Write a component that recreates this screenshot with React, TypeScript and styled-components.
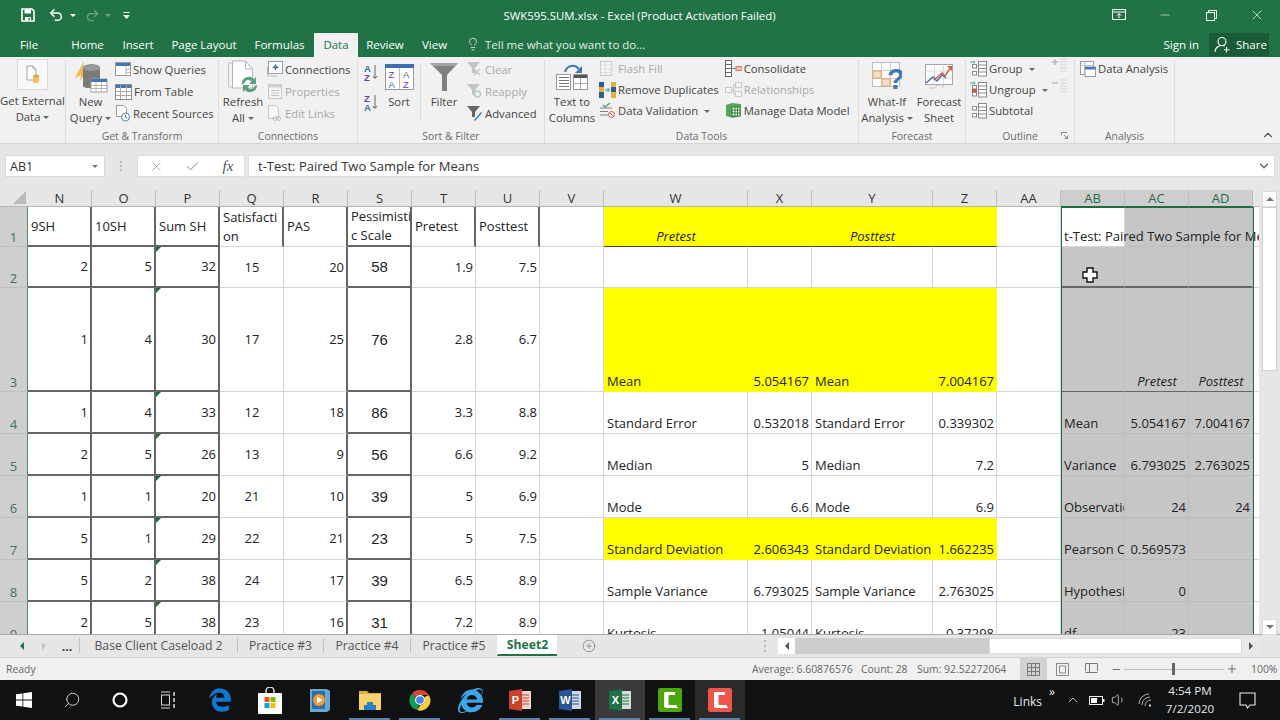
import React from 'react';
import styled, { createGlobalStyle } from 'styled-components';
import { Undo2, Redo2, X, Minus, Lightbulb, Check, ChevronUp, ChevronDown, CirclePlus, Plus, Volume1, Search } from 'lucide-react';
import { FaEdgeLegacy, FaInternetExplorer } from 'react-icons/fa6';

const UI = '"Open Sans", "Noto Sans", sans-serif';
const GREEN = '#217346';

const Global = createGlobalStyle`
  html, body { margin: 0; padding: 0; width: 1280px; height: 720px; overflow: hidden; background: #e6e6e6; }
  body { font-family: ${UI}; }
  * { box-sizing: border-box; }
  svg { display: block; flex: none; }
`;

const Window = styled.div`
  width: 1280px;
  height: 720px;
  display: flex;
  flex-direction: column;
  overflow: hidden;
`;

/* ---------- title bar ---------- */
const TitleBar = styled.div`
  height: 33px;
  padding-bottom: 3px;
  background: ${GREEN};
  color: #fff;
  display: grid;
  grid-template-columns: 1fr 400px 1fr;
  align-items: center;
`;
const Quick = styled.div`
  display: flex;
  align-items: center;
  padding-left: 20px;
`;
const QuickBtn = styled.span<{ $w: number; $off?: boolean; $ml?: number }>`
  width: ${p => p.$w}px;
  margin-left: ${p => p.$ml ?? 0}px;
  display: flex;
  align-items: center;
  justify-content: center;
  opacity: ${p => (p.$off ? 0.35 : 1)};
`;
const Caret = styled.i<{ $c?: string; $ml?: number }>`
  display: inline-block;
  width: 0;
  height: 0;
  margin-left: ${p => p.$ml ?? 0}px;
  border-left: 3px solid transparent;
  border-right: 3px solid transparent;
  border-top: 3px solid ${p => p.$c ?? '#fff'};
  vertical-align: middle;
`;
const DocTitle = styled.div`
  text-align: center;
  font-size: 11.4px;
  white-space: nowrap;
  margin-left: -1px;
`;
const WinControls = styled.div`
  display: flex;
  justify-content: flex-end;
  height: 100%;
`;
const WinBtn = styled.span`
  width: 46px;
  display: flex;
  align-items: center;
  justify-content: center;
`;

/* ---------- ribbon tabs ---------- */
const TabRow = styled.div`
  height: 24px;
  background: ${GREEN};
  display: flex;
  align-items: stretch;
  font-size: 11.5px;
  color: #fff;
`;
const RibbonTab = styled.div<{ $w: number; $active?: boolean; $ml?: number }>`
  width: ${p => p.$w}px;
  margin-left: ${p => p.$ml ?? 0}px;
  padding-bottom: 2px;
  display: flex;
  align-items: center;
  justify-content: center;
  background: ${p => (p.$active ? '#f1f1f1' : 'transparent')};
  color: ${p => (p.$active ? GREEN : '#fff')};
`;
const TellMe = styled.div`
  display: flex;
  align-items: center;
  gap: 5px;
  margin-left: 9px;
  padding-bottom: 2px;
  color: #e2efe7;
  flex: 1;
`;
const SignIn = styled.div`
  display: flex;
  align-items: center;
  margin-right: 10px;
  padding-bottom: 2px;
`;
const ShareBtn = styled.div`
  width: 60px;
  margin-right: 11px;
  margin-bottom: 1px;
  padding: 0 0 1px 5px;
  background: #1a5c38;
  display: flex;
  align-items: center;
  gap: 5px;
`;

/* ---------- ribbon ---------- */
const Ribbon = styled.div`
  height: 87px;
  background: #f1f1f1;
  border-bottom: 1px solid #d6d6d6;
  padding-top: 2px;
  display: flex;
  position: relative;
  font-size: 11.3px;
  color: #444;
`;
const Group = styled.div<{ $w: number }>`
  width: ${p => p.$w}px;
  height: 83px;
  margin-top: 1px;
  border-right: 1px solid #dcdcdc;
  display: flex;
  flex-direction: column;
`;
const GroupBody = styled.div<{ $pl?: number }>`
  height: 68px;
  flex: none;
  display: flex;
  padding-left: ${p => p.$pl ?? 0}px;
`;
const GroupLabel = styled.div`
  flex: 1;
  display: flex;
  align-items: center;
  justify-content: center;
  font-size: 10.4px;
  color: #6b6b6b;
  position: relative;
`;
const BigBtn = styled.div<{ $w: number; $ml?: number }>`
  width: ${p => p.$w}px;
  margin-left: ${p => p.$ml ?? 0}px;
  flex: none;
  display: flex;
  flex-direction: column;
  align-items: center;
  text-align: center;
  line-height: 16px;
  white-space: nowrap;
`;
const BigIcon = styled.div<{ $framed?: boolean }>`
  height: ${p => (p.$framed ? '31px' : '33px')};
  width: ${p => (p.$framed ? '31px' : 'auto')};
  margin: ${p => (p.$framed ? '-1px 0 3px' : '0 0 1px')};
  display: flex;
  align-items: center;
  justify-content: center;
  background: ${p => (p.$framed ? '#f8f8f8' : 'transparent')};
  border: ${p => (p.$framed ? '1px solid #dadada' : 'none')};
`;
const SmallCol = styled.div<{ $row?: number; $ml?: number; $top?: number }>`
  display: flex;
  flex-direction: column;
  margin-left: ${p => p.$ml ?? 0}px;
  margin-top: ${p => p.$top ?? -2}px;
  & > div { height: ${p => p.$row ?? 22}px; }
`;
const SmallRow = styled.div<{ $off?: boolean }>`
  display: flex;
  align-items: center;
  gap: 2px;
  white-space: nowrap;
  color: ${p => (p.$off ? '#a8a8a8' : '#444')};
`;
const VLine = styled.span<{ $ml: number; $mr: number }>`
  width: 1px;
  height: 56px;
  margin: 4px ${p => p.$mr}px 0 ${p => p.$ml}px;
  background: #dcdcdc;
`;
const Launcher = styled.span`
  position: absolute;
  right: 6px;
  top: 4px;
`;
const Collapse = styled.span`
  position: absolute;
  right: 5px;
  bottom: 1px;
  color: #555;
`;

/* ---------- formula bar ---------- */
const FormulaRow = styled.div`
  height: 46px;
  background: #e6e6e6;
  padding: 11px 5px 13px;
  display: flex;
  align-items: stretch;
`;
const NameBox = styled.div`
  width: 100px;
  background: #fff;
  border: 1px solid #d9d9d9;
  display: flex;
  align-items: center;
  justify-content: space-between;
  padding: 0 6px 0 4px;
  font-size: 12.5px;
  color: #333;
`;
const Grip = styled.div`
  width: 32px;
  display: flex;
  flex-direction: column;
  gap: 2px;
  align-items: center;
  justify-content: center;
  & > i { width: 2px; height: 2px; background: #bbb; }
`;
const FxBox = styled.div`
  width: 108px;
  background: #fff;
  border: 1px solid #dedede;
  display: grid;
  grid-template-columns: repeat(3, 36px);
  justify-items: center;
  align-items: center;
  color: #b5b5b5;
`;
const FxMark = styled.span`
  font-family: "Liberation Serif", serif;
  font-style: italic;
  font-size: 15px;
  color: #555;
`;
const FormulaInput = styled.div`
  flex: 1;
  margin-left: 3px;
  background: #fff;
  border: 1px solid #dedede;
  display: flex;
  align-items: center;
  justify-content: space-between;
  padding: 0 3px 0 9px;
  font-size: 13px;
  color: #333;
`;

/* ---------- sheet ---------- */
const SheetArea = styled.div`
  height: 445px;
  display: flex;
  border-bottom: 1px solid #a9a9a9;
`;
const GridPane = styled.div`
  width: 1259px;
  position: relative;
  overflow: hidden;
  background: #fff;
`;
const Cols = [64, 64, 64, 64, 64, 64, 64, 64, 64, 144, 64, 121, 64, 64, 64, 64, 64, 64];
const Rows = [40, 41, 104, 42, 42, 42, 42, 42, 42];
const SheetGrid = styled.div`
  display: grid;
  grid-template-columns: 28px ${Cols.map(c => `${c}px`).join(' ')};
  grid-template-rows: 17px ${Rows.map(r => `${r}px`).join(' ')};
`;
const Corner = styled.div`
  background: #e6e6e6;
  border-bottom: 1px solid #b5b5b5;
  display: flex;
  align-items: flex-end;
  justify-content: flex-end;
  padding: 0 2px 2px 0;
`;
const ColHead = styled.div<{ $sel?: boolean }>`
  background: ${p => (p.$sel ? '#cecece' : '#e6e6e6')};
  color: ${p => (p.$sel ? '#1f6b42' : '#333')};
  border-right: 1px solid ${p => (p.$sel ? '#bdbdbd' : '#c0c0c0')};
  border-bottom: 1px solid ${p => (p.$sel ? '#1f6b42' : '#b5b5b5')};
  display: flex;
  align-items: center;
  justify-content: center;
  font-size: 13px;
`;
const RowHead = styled.div`
  background: #cfcfcf;
  color: #43705a;
  border-right: 1px solid #4f8a6a;
  border-bottom: 1px solid #c0c0c0;
  display: flex;
  align-items: flex-end;
  justify-content: center;
  padding-bottom: 1px;
  font-size: 13px;
  line-height: 16px;
`;
const Cell = styled.div<{
  $h: 'left' | 'right' | 'center';
  $v: 'center' | 'end';
  $bg: string;
  $lineR: string;
  $lineB: string;
  $wR: number;
  $wB: number;
  $italic?: boolean;
  $big?: boolean;
  $free?: boolean;
  $flag?: boolean;
}>`
  position: relative;
  display: flex;
  align-items: ${p => (p.$v === 'end' ? 'flex-end' : 'center')};
  justify-content: ${p => (p.$h === 'left' ? 'flex-start' : p.$h === 'right' ? 'flex-end' : 'center')};
  background: ${p => p.$bg};
  border-right: ${p => p.$wR}px solid ${p => p.$lineR};
  border-bottom: ${p => p.$wB}px solid ${p => p.$lineB};
  padding: 0 2px 0 3px;
  overflow: ${p => (p.$free ? 'visible' : 'hidden')};
  z-index: ${p => (p.$free ? 1 : 0)};
  font-family: ${p => (p.$big ? '"Liberation Sans", sans-serif' : UI)};
  font-size: ${p => (p.$big ? '15px' : '13px')};
  font-style: ${p => (p.$italic ? 'italic' : 'normal')};
  line-height: 19px;
  color: #222;
  white-space: ${p => (p.$free ? 'nowrap' : 'pre-line')};
  word-break: keep-all;
  ${p => p.$flag && `
    &::before {
      content: '';
      position: absolute;
      left: 0;
      top: 0;
      border-top: 5px solid #1a6b3a;
      border-right: 5px solid transparent;
    }
  `}
`;
const CellText = styled.span`
  white-space: inherit;
  flex: none;
`;
const Selection = styled.div`
  position: absolute;
  left: 1061px;
  top: 17px;
  width: 193px;
  height: 460px;
  border: 1px solid #1f6b42;
  pointer-events: none;
  z-index: 2;
`;
const CellCursor = styled.span`
  position: absolute;
  left: 1082px;
  top: 77px;
  z-index: 3;
`;
const VScroll = styled.div`
  flex: 1;
  background: #e6e6e6;
  padding: 0 3px;
  display: flex;
  flex-direction: column;
`;
const ScrollBtn = styled.div<{ $end?: boolean }>`
  height: 16px;
  background: #fff;
  border: 1px solid #dcdcdc;
  display: flex;
  align-items: center;
  justify-content: center;
  margin-top: ${p => (p.$end ? 'auto' : '1px')};
  margin-bottom: ${p => (p.$end ? '-1px' : '0')};
`;
const ScrollThumb = styled.div`
  height: 164px;
  background: #fff;
  border: 1px solid #cfcfcf;
`;
const Arrow = styled.i<{ $d: 'up' | 'down' | 'left' | 'right'; $c?: string }>`
  width: 0;
  height: 0;
  display: block;
  ${p => (p.$d === 'up' || p.$d === 'down'
    ? `border-left: 4px solid transparent; border-right: 4px solid transparent;`
    : `border-top: 4px solid transparent; border-bottom: 4px solid transparent;`)}
  ${p => p.$d === 'up' && `border-bottom: 4px solid ${p.$c ?? '#777'};`}
  ${p => p.$d === 'down' && `border-top: 4px solid ${p.$c ?? '#777'};`}
  ${p => p.$d === 'left' && `border-right: 4px solid ${p.$c ?? '#555'};`}
  ${p => p.$d === 'right' && `border-left: 4px solid ${p.$c ?? '#555'};`}
`;

/* ---------- sheet tabs ---------- */
const TabsBar = styled.div`
  height: 23px;
  background: #e6e6e6;
  border-bottom: 1px solid #d4d4d4;
  display: flex;
  align-items: stretch;
  font-size: 12.2px;
  color: #555;
`;
const NavBtn = styled.div<{ $w: number; $ml?: number; $bold?: boolean }>`
  width: ${p => p.$w}px;
  margin-left: ${p => p.$ml ?? 0}px;
  display: flex;
  align-items: center;
  justify-content: center;
  font-weight: ${p => (p.$bold ? 700 : 400)};
  color: #333;
`;
const SheetTab = styled.div<{ $w: number; $active?: boolean }>`
  width: ${p => p.$w}px;
  margin: ${p => (p.$active ? '0 0 1px' : '3px 0 4px')};
  display: flex;
  align-items: center;
  justify-content: center;
  border-left: 1px solid ${p => (p.$active ? 'transparent' : '#c2c2c2')};
  background: ${p => (p.$active ? '#fff' : 'transparent')};
  border-bottom: ${p => (p.$active ? `2px solid ${GREEN}` : 'none')};
  color: ${p => (p.$active ? GREEN : '#555')};
  font-weight: ${p => (p.$active ? 700 : 400)};
`;
const AddSheet = styled.div`
  margin-left: 25px;
  display: flex;
  align-items: center;
  color: #777;
`;
const Splitter = styled.div`
  margin-left: 168px;
  display: flex;
  flex-direction: column;
  justify-content: center;
  gap: 3px;
  & > i { width: 2px; height: 2px; background: #bbb; display: block; }
`;
const HScroll = styled.div`
  margin: 3px 0 3px 12px;
  width: 481px;
  display: flex;
  align-items: stretch;
`;
const HBtn = styled.div<{ $white?: boolean }>`
  width: 17px;
  background: ${p => (p.$white ? '#fff' : '#e9e9e9')};
  display: flex;
  align-items: center;
  justify-content: center;
`;
const HTrack = styled.div`
  flex: 1;
  background: #cdcdcd;
  display: flex;
  justify-content: flex-end;
`;
const HThumb = styled.div`
  width: 253px;
  background: #fff;
  border: 1px solid #dcdcdc;
`;

/* ---------- status bar ---------- */
const StatusBar = styled.div`
  height: 22px;
  background: #f0f0f0;
  display: flex;
  align-items: stretch;
  font-size: 10.4px;
  color: #666;
`;
const Ready = styled.div`
  width: 752px;
  padding-left: 6px;
  display: flex;
  align-items: center;
`;
const Stat = styled.div<{ $w: number }>`
  width: ${p => p.$w}px;
  display: flex;
  align-items: center;
  white-space: nowrap;
`;
const ViewBtn = styled.div<{ $w: number; $on?: boolean }>`
  width: ${p => p.$w}px;
  background: ${p => (p.$on ? '#d2d2d2' : 'transparent')};
  display: flex;
  align-items: center;
  justify-content: center;
`;
const Zoomer = styled.div`
  margin-left: 6px;
  display: flex;
  align-items: center;
  gap: 2px;
  color: #666;
`;
const ZoomTrack = styled.div`
  width: 100px;
  height: 1px;
  background: #bdbdbd;
  position: relative;
`;
const ZoomThumb = styled.span`
  position: absolute;
  left: 48px;
  top: -6px;
  width: 3px;
  height: 12px;
  background: #666;
`;
const ZoomPct = styled.span`
  margin-left: 11px;
`;

/* ---------- taskbar ---------- */
const Taskbar = styled.div`
  height: 40px;
  background: #101113;
  display: flex;
  align-items: stretch;
  color: #e8e8e8;
`;
const TaskSlot = styled.div<{ $w?: number; $open?: boolean; $bg?: string; $ml?: number }>`
  width: ${p => p.$w ?? 50}px;
  margin-left: ${p => p.$ml ?? 0}px;
  position: relative;
  display: flex;
  align-items: center;
  justify-content: center;
  background: ${p => p.$bg ?? 'transparent'};
  ${p => p.$open && `
    &::after {
      content: '';
      position: absolute;
      left: 4px;
      right: 5px;
      bottom: 0;
      height: 2px;
      background: #5d83ad;
    }
  `}
`;
const MirroredSearch = styled(Search)`
  transform: scaleX(-1);
`;
const Tray = styled.div`
  margin-left: auto;
  display: flex;
  align-items: center;
  font-size: 12px;
`;
const Links = styled.span`
  margin-top: 2px;
`;
const Chevrons = styled.span`
  margin: -16px 0 0 7px;
  font-size: 12px;
  line-height: 1;
`;
const TrayIcon = styled.span<{ $ml: number }>`
  margin-left: ${p => p.$ml}px;
  display: flex;
  align-items: center;
`;
const Clock = styled.div`
  width: 56px;
  margin-left: 10px;
  text-align: center;
  line-height: 18px;
  font-size: 11.6px;
`;
const Notify = styled.span`
  margin: 0 24px 0 21px;
`;

/* ---------- icons ---------- */
const SaveIcon = () => (
  <svg width="14" height="14" viewBox="0 0 14 14">
    <path d="M1 1h10l2 2v10H1z" fill="none" stroke="#fff" strokeWidth="1.6" />
    <rect x="3.5" y="1.5" width="6.5" height="4" fill="#fff" />
    <rect x="4" y="9" width="6" height="4" fill="#fff" />
    <rect x="7.5" y="10" width="1.4" height="2.4" fill={GREEN} />
  </svg>
);
const CustomizeIcon = () => (
  <svg width="7" height="7" viewBox="0 0 7 7" fill="#fff">
    <rect x="0.5" y="0" width="6" height="1" />
    <path d="M0 3h7L3.500 7z" />
  </svg>
);
const RibbonDisplay = () => (
  <svg width="14" height="12" viewBox="0 0 14 12" fill="none" stroke="#fff">
    <rect x=".5" y=".5" width="13" height="10" />
    <path d="M.5 3h13M7 9V4.5M5 6.5l2-2 2 2" />
  </svg>
);
const Restore = () => (
  <svg width="11" height="11" viewBox="0 0 11 11" fill="none" stroke="#fff">
    <rect x=".5" y="2.5" width="8" height="8" />
    <path d="M2.5 2.5v-2h8v8h-2" />
  </svg>
);
const ShareUser = () => (
  <svg width="17" height="17" viewBox="0 0 17 17" fill="none" stroke="#fff" strokeWidth="1.1">
    <circle cx="8" cy="5.5" r="4" />
    <path d="M1 16c0-4 3-6.5 7-6.5 1 0 2 .2 3 .6M12.5 11v5.5M10 13.8h5.5" />
  </svg>
);
const GetDataIcon = () => (
  <svg width="14" height="20" viewBox="0 0 14 20">
    <path d="M1 1h6l3 3v11H1z" fill="#fff" stroke="#a5a5a5" />
    <path d="M7 1v3h3" fill="none" stroke="#a5a5a5" />
    <rect x="7" y="11" width="6" height="7" rx="1.5" fill="#f2c063" />
    <ellipse cx="10" cy="11" rx="3" ry="1.2" fill="#e09f33" />
  </svg>
);
const NewQueryIcon = () => (
  <svg width="34" height="32" viewBox="0 0 34 32">
    <path d="M10 0 1 17l6-3-1 6 9-13-6 2z" fill="#f0b84f" />
    <path d="M9 7c0-5 17-5 17 0v18c0 3-17 3-17 0z" fill="#7a7a7a" />
    <ellipse cx="17.5" cy="7" rx="8.5" ry="3" fill="#9a9a9a" />
    <rect x="17" y="18" width="16" height="13" fill="#fff" stroke="#a0a0a0" />
    <rect x="17" y="18" width="16" height="3" fill="#3f78b5" />
    <path d="M17 24.500h16M17 27.500h16M22 21v10M27.500 21v10" stroke="#b5b5b5" />
  </svg>
);
const TableTop = ({ c = '#3f78b5' }: { c?: string }) => (
  <svg width="16" height="14" viewBox="0 0 16 14">
    <rect x=".5" y=".5" width="15" height="13" fill="#fff" stroke="#9a9a9a" />
    <rect x="1" y="1" width="14" height="3" fill={c} />
    <path d="M11 4v9M11 7.500h4M11 10.500h4" stroke="#bbb" />
  </svg>
);
const GridTable = () => (
  <svg width="17" height="17" viewBox="0 0 17 17">
    <rect x=".5" y="1.500" width="16" height="15" fill="#fff" stroke="#8a8a8a" />
    <rect x="1" y="2" width="15" height="3" fill="#3f78b5" />
    <path d="M1 8.500h15M1 12.500h15M5.500 2v14M11.500 2v14" stroke="#a8a8a8" />
  </svg>
);
const RecentIcon = () => (
  <svg width="16" height="17" viewBox="0 0 16 17">
    <path d="M1.500.5h7l3 3v8h-10z" fill="#fff" stroke="#9a9a9a" />
    <circle cx="10.500" cy="12" r="4" fill="#fff" stroke="#4f81bd" />
    <path d="M10.500 9.800V12l1.800 1" fill="none" stroke="#666" />
  </svg>
);
const RefreshIcon = () => (
  <svg width="33" height="33" viewBox="0 0 33 33">
    <path d="M1.500 3h6v24h-6z" fill="#f2f2f2" stroke="#c3c3c3" />
    <path d="M5.500 1h13l7 8v19h-20z" fill="#fff" stroke="#b5b5b5" />
    <path d="M18.500 1v8h7" fill="none" stroke="#b5b5b5" />
    <path d="M15 25a7 7 0 0 1 12-6l2-2v7h-7l2.500-2.500a4 4 0 0 0-7 1.500z" fill="#5aa17f" />
    <path d="M30 25a7 7 0 0 1-12 5l-2 2v-7h7l-2.500 2.500a4 4 0 0 0 7-1.500z" fill="#5aa17f" />
  </svg>
);
const ConnIcon = () => (
  <svg width="16" height="16" viewBox="0 0 16 16">
    <rect x="1.500" y=".5" width="14" height="12" fill="#fff" stroke="#8aa0b8" />
    <path d="M8.500 2.500l1 2.500 2.500 1.500-2.500 1-1 2.500-1-2.500-2.500-1 2.500-1.500z" fill="#3f78b5" />
    <path d="M.5 6v9h10" fill="none" stroke="#bbb" />
  </svg>
);
const PropsIcon = () => (
  <svg width="16" height="17" viewBox="0 0 16 17">
    <rect x="1.500" y="1.500" width="13" height="14" fill="#f6f6f6" stroke="#c5c5c5" />
    <rect x="1.500" y="1.500" width="13" height="3" fill="#cfcfcf" />
    <path d="M4 7.500h8M4 10h8M4 12.500h8" stroke="#c5c5c5" />
  </svg>
);
const LinksIcon = () => (
  <svg width="16" height="17" viewBox="0 0 16 17">
    <path d="M1.500.5h7l3 3v10h-10z" fill="#f8f8f8" stroke="#c5c5c5" />
    <circle cx="8" cy="13.500" r="2" fill="none" stroke="#bbb" />
    <circle cx="11.500" cy="13.500" r="2" fill="none" stroke="#bbb" />
  </svg>
);
const AzIcon = ({ up }: { up?: boolean }) => (
  <svg width="14" height="19" viewBox="0 0 14 19">
    <text x="0" y="8.500" fontSize="9.500" fontWeight="700" fontFamily="Liberation Sans" fill={up ? '#2f6fb0' : '#6a3fa0'}>{up ? 'A' : 'Z'}</text>
    <text x="0" y="17.500" fontSize="9.500" fontWeight="700" fontFamily="Liberation Sans" fill={up ? '#6a3fa0' : '#2f6fb0'}>{up ? 'Z' : 'A'}</text>
    <path d="M11 2v13M9 13l2 2.500 2-2.500" fill="none" stroke="#666" />
  </svg>
);
const SortIcon = () => (
  <svg width="29" height="26" viewBox="0 0 29 26">
    <rect x=".5" y=".5" width="28" height="25" fill="#fff" stroke="#9a9a9a" />
    <rect x="0" y="0" width="29" height="4" fill="#3f6fb0" />
    <path d="M14.500 4v21" stroke="#bbb" />
    <text x="3.500" y="14" fontSize="9.500" fontFamily="Liberation Sans" fill="#6a3fa0">Z</text>
    <text x="3.500" y="23.500" fontSize="9.500" fontFamily="Liberation Sans" fill="#2f6fb0">A</text>
    <text x="18" y="14" fontSize="9.500" fontFamily="Liberation Sans" fill="#2f6fb0">A</text>
    <text x="18" y="23.500" fontSize="9.500" fontFamily="Liberation Sans" fill="#6a3fa0">Z</text>
  </svg>
);
const FunnelBig = () => (
  <svg width="28" height="28" viewBox="0 0 28 28">
    <path d="M0 0h28L17 12v16h-5V12z" fill="#7f7f7f" />
    <path d="M0 0h28l-3 3H3z" fill="#a5a5a5" />
  </svg>
);
const Funnel = ({ off, mark }: { off?: boolean; mark: 'x' | 'r' | 'p' }) => (
  <svg width="17" height="16" viewBox="0 0 17 16">
    <path d="M1 1h13L9 7v5H6V7z" fill={off ? '#c4c4c4' : '#666'} />
    {mark === 'x' && <path d="M8 8l6 6M14 8l-6 6" stroke="#c0c0c0" strokeWidth="1.300" />}
    {mark === 'r' && <circle cx="11.500" cy="11" r="3" fill="none" stroke="#b4cdbd" strokeWidth="1.500" />}
    {mark === 'p' && <path d="M8 15l7-8 1 1-7 8z" fill="#2f7fc1" />}
  </svg>
);
const TextColsIcon = () => (
  <svg width="32" height="26" viewBox="0 0 32 26">
    <rect x=".5" y="10.500" width="14" height="15" fill="#fff" stroke="#999" />
    <path d="M3 13.500h10M3 16.500h10M3 19.500h10M3 22.500h10" stroke="#777" />
    <rect x="17.500" y="10.500" width="14" height="15" fill="#fff" stroke="#999" />
    <rect x="18" y="11" width="13" height="3" fill="#555" />
    <path d="M24.500 14v11M18 19.500h13" stroke="#aaa" />
    <path d="M9 8C11 1 19 0 23 5" fill="none" stroke="#3f78b5" strokeWidth="2" />
    <path d="M26 2v7h-7z" fill="#3f78b5" />
  </svg>
);
const FlashIcon = () => (
  <svg width="17" height="16" viewBox="0 0 17 16">
    <rect x="1.500" y=".5" width="11" height="14" fill="#f6f6f6" stroke="#d0c4c4" />
    <path d="M1.500 4h11M1.500 8h11M1.500 11.500h11M6 .5v14" stroke="#dcdcdc" />
    <path d="M12 6l4 0-3 3 2 0-4 5 1-4h-2z" fill="#dfdfdf" />
  </svg>
);
const DupIcon = () => (
  <svg width="17" height="16" viewBox="0 0 17 16">
    <rect x="0" y="0" width="5" height="16" fill="#2d5d96" />
    <rect x="0" y="5" width="5" height="5" fill="#e3b23e" />
    <rect x="12" y="0" width="5" height="16" fill="#e3b23e" />
    <rect x="12" y="5" width="5" height="5" fill="#2d5d96" />
    <path d="M6 8h4M8.500 6l2 2-2 2" fill="none" stroke="#2f7fc1" />
  </svg>
);
const ValidIcon = () => (
  <svg width="17" height="17" viewBox="0 0 17 17">
    <path d="M1 6h12M1 9.500h8M1 13h8" stroke="#7f7f7f" />
    <path d="M4 3l2 2 5-4" fill="none" stroke="#5aa17f" strokeWidth="1.400" />
    <circle cx="12.500" cy="12.500" r="3" fill="#fff" stroke="#d25a3a" />
    <path d="M10.500 10.500l4 4" stroke="#d25a3a" />
  </svg>
);
const ConsolIcon = () => (
  <svg width="17" height="17" viewBox="0 0 17 17">
    <rect x=".5" y=".5" width="6" height="16" fill="#fff" stroke="#666" />
    <path d="M.5 4.500h6M.5 8.500h6M.5 12.500h6" stroke="#666" />
    <path d="M7.500 8.500h3" stroke="#2f7fc1" />
    <rect x="11" y="6.500" width="6" height="4" fill="#f0c3b5" stroke="#d97a5e" />
  </svg>
);
const RelIcon = () => (
  <svg width="17" height="15" viewBox="0 0 17 15" fill="#f4f4f4" stroke="#c9c9c9">
    <rect x=".5" y="5.500" width="6" height="5" />
    <rect x="10.500" y=".5" width="6" height="5" />
    <rect x="10.500" y="9.500" width="6" height="5" />
    <path d="M6.500 8h4M8.500 3h2M8.500 3v9h2" fill="none" />
  </svg>
);
const ModelIcon = () => (
  <svg width="17" height="17" viewBox="0 0 17 17">
    <path d="M1 3l6-2 9 1v12l-8 2-7-2z" fill="#57a55a" />
    <rect x="7" y="5" width="8" height="9" fill="#fff" stroke="#2e7d32" />
    <path d="M7 8h8M7 11h8M10 5v9M12.500 5v9" stroke="#2e7d32" />
  </svg>
);
const WhatIfIcon = () => (
  <svg width="30" height="30" viewBox="0 0 30 30">
    <rect x=".5" y=".5" width="27" height="24" fill="#fff" stroke="#bdbdbd" />
    <path d="M.5 8.500h27M.5 16.500h27M9.500.5v24M18.500.5v24" stroke="#c9c9c9" />
    <rect x="1" y="9" width="8" height="7" fill="#f6e1c8" stroke="#e4a766" />
    <rect x="10" y="17" width="8" height="7" fill="#f6e1c8" stroke="#e4a766" />
    <text x="15" y="27" fontSize="29" fontWeight="700" fontFamily="Liberation Sans" fill="#3f78b5">?</text>
  </svg>
);
const ForecastIcon = () => (
  <svg width="29" height="26" viewBox="0 0 29 26">
    <rect x=".5" y=".5" width="27" height="20" fill="#fff" stroke="#a5a5a5" />
    <path d="M9.500.5v20M18.500.5v20M.5 7h27M.5 14h27" stroke="#dadada" />
    <path d="M1 19l7-6 4 4 5-6 4 3" fill="none" stroke="#3f6fb0" strokeWidth="1.400" />
    <path d="M9 16l8-7 3 3 6-9" fill="none" stroke="#d25a3a" strokeWidth="1.400" />
    <path d="M22 2h5v5z" fill="#d25a3a" />
    <path d="M4 24h6l2-3h7l-2 3" fill="none" stroke="#c4c4c4" />
  </svg>
);
const OutlineIcon = ({ v }: { v: 'g' | 'u' | 's' }) => (
  <svg width="17" height="17" viewBox="0 0 17 17">
    {v !== 's' && <path d="M0 2h5M3.500.5 5 2 3.500 3.500" fill="none" stroke="#5aa17f" />}
    <rect x="8.500" y="1.500" width="8" height="14.500" fill="#fff" stroke="#8a8a8a" />
    <path d="M8.500 5h8M8.500 8.500h8M8.500 12h8" stroke="#8a8a8a" />
    <rect x="2.500" y="4.500" width="4" height="3.500" fill="#fff" stroke="#8a8a8a" />
    <rect x="2.500" y="11.500" width="4" height="3.500" fill="#fff" stroke="#8a8a8a" />
    {v === 'u' && <rect x="2" y="8" width="5" height="3" fill="#d25a3a" />}
  </svg>
);
const OutlineSide = ({ plus }: { plus?: boolean }) => (
  <svg width="16" height="15" viewBox="0 0 16 15">
    <path d={plus ? 'M0 4h6M3 1v6' : 'M0 4h6'} stroke="#b8b8b8" strokeWidth="1.400" />
    <path d="M8 1h7M8 4h7M8 7h7M8 10h7M8 13h7" stroke="#d5d5d5" />
  </svg>
);
const AnalysisIcon = () => (
  <svg width="16" height="16" viewBox="0 0 16 16">
    <rect x=".5" y=".5" width="13" height="13" fill="#fff" stroke="#9a9a9a" />
    <path d="M.5 4.500h13M5 .5v13" stroke="#bbb" />
    <rect x="5" y="6" width="10.500" height="9.500" fill="#fff" stroke="#9a9a9a" />
    <rect x="5" y="6" width="10.500" height="2.500" fill="#3f78b5" />
  </svg>
);
const LauncherIcon = () => (
  <svg width="7" height="7" viewBox="0 0 7 7" fill="none" stroke="#888">
    <path d="M.5 3V.5H6M3 3l3.500 3.500M3.500 6.500h3v-3" />
  </svg>
);
const CornerMark = () => (
  <svg width="13" height="13" viewBox="0 0 13 13"><path d="M13 0v13H0z" fill="#b9b9b9" /></svg>
);
const CursorCross = () => (
  <svg width="16" height="16" viewBox="0 0 16 16">
    <path d="M5 1h6v4h4v6h-4v4H5v-4H1V5h4z" fill="#fff" stroke="#111" strokeWidth="1.400" />
  </svg>
);
const NormalView = () => (
  <svg width="13" height="13" viewBox="0 0 13 13" fill="none" stroke="#777">
    <path d="M.5.5h12v12H.5zM4.500.5v12M8.500.5v12M.5 4.500h12M.5 8.500h12" />
  </svg>
);
const PageView = () => (
  <svg width="13" height="13" viewBox="0 0 13 13" fill="none" stroke="#888">
    <path d="M.5.5h12v12H.5zM3.500 3h6v7h-6z" />
  </svg>
);
const BreakView = () => (
  <svg width="13" height="13" viewBox="0 0 13 13" fill="none" stroke="#777">
    <path d="M.5 8V.5h12V8M.5 9.500h12M4.500 .5V9.500" />
  </svg>
);

/* taskbar logos */
const WinLogo = () => (
  <svg width="16" height="16" viewBox="0 0 16 16" fill="#fff">
    <path d="M0 2.300 6.500 1.400v6.200H0zM7.300 1.300 16 0v7.600H7.300zM0 8.400h6.500v6.200L0 13.700zM7.300 8.400H16V16l-8.700-1.300z" />
  </svg>
);
const CortanaRing = () => (
  <svg width="16" height="16" viewBox="0 0 16 16"><circle cx="8" cy="8" r="6.500" fill="none" stroke="#fff" strokeWidth="2.200" /></svg>
);
const TaskViewIcon = () => (
  <svg width="17" height="18" viewBox="0 0 17 18" fill="none" stroke="#ddd">
    <path d="M1 1h9M1 17h9" strokeWidth="1.200" />
    <rect x="1.500" y="4" width="8" height="10" />
    <path d="M14 1v4M14 7v4M14 13v4" strokeWidth="1.500" />
  </svg>
);
const StoreIcon = () => (
  <svg width="24" height="27" viewBox="0 0 24 27">
    <path d="M8 7V4a4 4 0 0 1 8 0v3" fill="none" stroke="#ddd" strokeWidth="1.500" />
    <rect x="0" y="6" width="24" height="21" rx="1" fill="#fff" />
    <rect x="6.500" y="10" width="5" height="5" fill="#f25022" />
    <rect x="12.500" y="10" width="5" height="5" fill="#7fba00" />
    <rect x="6.500" y="16" width="5" height="5" fill="#00a4ef" />
    <rect x="12.500" y="16" width="5" height="5" fill="#ffb900" />
  </svg>
);
const MediaIcon = () => (
  <svg width="20" height="24" viewBox="0 0 20 24">
    <path d="M0 1l17 0 3 2v19l-3 2H0z" fill="#6ba6d2" />
    <rect x="2" y="3" width="13" height="18" fill="#2e6f9f" />
    <circle cx="9" cy="12" r="6" fill="#f29c38" />
    <path d="M7 8.500v7l5.500-3.500z" fill="#fff" />
  </svg>
);
const FolderIcon = () => (
  <svg width="22" height="19" viewBox="0 0 22 19">
    <path d="M0 0h8l2 2h12v17H0z" fill="#e0ac3a" />
    <rect x="0" y="3" width="22" height="16" fill="#f7d26c" />
    <path d="M5 19v-5h3v-3h6v3h3v5z" fill="#2c7fc7" />
  </svg>
);
const ChromeIcon = () => (
  <svg width="22" height="22" viewBox="0 0 24 24">
    <path d="M12 1a11 11 0 0 1 9.500 5.500H12a5.500 5.500 0 0 0-5 3.300L3.500 4.500A11 11 0 0 1 12 1z" fill="#db4437" />
    <path d="M3.500 4.500 7 10a5.500 5.500 0 0 0 4 7.400L9 23A11 11 0 0 1 3.500 4.500z" fill="#0f9d58" />
    <path d="M21.500 6.500A11 11 0 0 1 9 23l3.500-5.500a5.500 5.500 0 0 0 4-8.500z" fill="#ffcd40" />
    <circle cx="12" cy="12" r="5.500" fill="#fff" />
    <circle cx="12" cy="12" r="4.200" fill="#4285f4" />
  </svg>
);
const OfficeTile = ({ bg, letter, lines }: { bg: string; letter: string; lines: string }) => (
  <svg width="22" height="22" viewBox="0 0 22 22">
    <rect x="10" y="2" width="12" height="18" fill={lines} />
    <path d="M13 6h7M13 9h7M13 12h7M13 15h7" stroke={bg} />
    <path d="M0 2 13 0v22L0 20z" fill={bg} />
    <text x="6.500" y="15" textAnchor="middle" fontSize="11" fontWeight="700" fontFamily="Liberation Sans" fill="#fff">{letter}</text>
  </svg>
);
const CamtasiaTile = ({ c }: { c: string }) => (
  <svg width="24" height="24" viewBox="0 0 24 24">
    <rect width="24" height="24" rx="2" fill={c} />
    <path d="M7 4h10v3h-6.500v10H18l2 3H8l-2-1V5z" fill="#fff" />
    <path d="M10.500 17H18l2 3H8z" fill="#fff" opacity=".75" />
  </svg>
);
const BatteryIcon = () => (
  <svg width="16" height="11" viewBox="0 0 16 11">
    <rect x=".5" y="1.500" width="13" height="8" fill="none" stroke="#eee" />
    <rect x="2" y="3" width="6" height="5" fill="#fff" />
    <rect x="14" y="4" width="1.500" height="3" fill="#eee" />
  </svg>
);
const WifiIcon = () => (
  <svg width="14" height="15" viewBox="0 0 14 15" fill="none" stroke="#aaa">
    <path d="M1 11A10 10 0 0 1 11 1" />
    <path d="M4 12A8 8 0 0 1 12 4" />
    <path d="M7 13a6 6 0 0 1 6-6" />
    <rect x="11" y="11.500" width="2" height="2" fill="#ddd" stroke="none" />
  </svg>
);
const NotifyIcon = () => (
  <svg width="17" height="17" viewBox="0 0 17 17" fill="none" stroke="#eee" strokeWidth="1.100">
    <path d="M1 1h15v12h-5l-2.500 3L7 13H1z" />
  </svg>
);

/* ---------- sheet data ---------- */
const Letters = ['N', 'O', 'P', 'Q', 'R', 'S', 'T', 'U', 'V', 'W', 'X', 'Y', 'Z', 'AA', 'AB', 'AC', 'AD', ''];
const Data: string[][] = [
  ['9SH', '10SH', 'Sum SH', 'Satisfacti\non', 'PAS', 'Pessimisti\nc Scale', 'Pretest', 'Posttest', '', 'Pretest', '', 'Posttest', '', '', 't-Test: Paired Two Sample for Means', '', '', ''],
  ['2', '5', '32', '15', '20', '58', '1.9', '7.5', '', '', '', '', '', '', '', '', '', ''],
  ['1', '4', '30', '17', '25', '76', '2.8', '6.7', '', 'Mean', '5.054167', 'Mean', '7.004167', '', '', 'Pretest', 'Posttest', ''],
  ['1', '4', '33', '12', '18', '86', '3.3', '8.8', '', 'Standard Error', '0.532018', 'Standard Error', '0.339302', '', 'Mean', '5.054167', '7.004167', ''],
  ['2', '5', '26', '13', '9', '56', '6.6', '9.2', '', 'Median', '5', 'Median', '7.2', '', 'Variance', '6.793025', '2.763025', ''],
  ['1', '1', '20', '21', '10', '39', '5', '6.9', '', 'Mode', '6.6', 'Mode', '6.9', '', 'Observations', '24', '24', ''],
  ['5', '1', '29', '22', '21', '23', '5', '7.5', '', 'Standard Deviation', '2.606343', 'Standard Deviation', '1.662235', '', 'Pearson Correlation', '0.569573', '', ''],
  ['5', '2', '38', '24', '17', '39', '6.5', '8.9', '', 'Sample Variance', '6.793025', 'Sample Variance', '2.763025', '', 'Hypothesized Mean Difference', '0', '', ''],
  ['2', '5', '38', '23', '16', '31', '7.2', '8.9', '', 'Kurtosis', '-1.05044', 'Kurtosis', '-0.37298', '', 'df', '23', '', ''],
];

const GRID = '#d6d6d6';
const SEL = '#c6c6c6';
const SELGRID = '#bcbcbc';
const THICK = '#666';

const cellProps = (r: number, c: number) => {
  const inSel = c >= 14 && c <= 16;
  const sel = inSel && !(r === 0 && c === 14);
  const yellow = c >= 9 && c <= 12 && (r === 0 || r === 2 || r === 6);
  const heavyR = [0, 1, 2, 4, 5].includes(c) || (r === 0 && [3, 6, 7].includes(c));
  const heavyB = [0, 1, 2, 5].includes(c) && r < 8;
  const selRule = inSel && (r === 1 || r === 2);
  const base = yellow ? '#ffff00' : sel ? SEL : '#fff';
  const line = yellow ? '#ffff00' : sel ? SELGRID : GRID;

  let h: 'left' | 'right' | 'center' = 'right';
  let v: 'center' | 'end' = 'end';
  if (c <= 8) {
    v = 'center';
    h = r === 0 ? 'left' : c === 3 || c === 5 ? 'center' : 'right';
  } else if (c === 9 || c === 11 || c === 14) {
    h = r === 0 ? 'center' : 'left';
  } else if (r === 2 && inSel) {
    h = 'center';
  }
  if (r === 0 && c === 14) h = 'left';

  return {
    $h: h,
    $v: v,
    $bg: base,
    $lineR: heavyR ? THICK : line,
    $wR: heavyR ? 2 : 1,
    $lineB: heavyB || selRule ? THICK : r === 0 && c >= 9 && c <= 12 ? '#444' : line,
    $wB: heavyB || (selRule && r === 1) ? 2 : 1,
    $italic: (r === 0 && (c === 9 || c === 11)) || (r === 2 && inSel),
    $big: c === 5 && r > 0,
    $free: r === 0 && c === 14,
    $flag: c === 2 && r > 0,
  };
};

const SmallItem: React.FC<{ icon: React.ReactNode; label: React.ReactNode; off?: boolean }> = ({ icon, label, off }) => (
  <SmallRow $off={off}>
    {icon}
    <span>{label}</span>
  </SmallRow>
);

const App: React.FC = () => (
  <Window>
    <Global />
    <TitleBar>
      <Quick>
        <QuickBtn $w={15}><SaveIcon /></QuickBtn>
        <QuickBtn $w={16} $ml={13}><Undo2 size={16} color="#fff" strokeWidth={2.2} /></QuickBtn>
        <QuickBtn $w={18}><Caret /></QuickBtn>
        <QuickBtn $w={20} $off><Redo2 size={15} color="#fff" /></QuickBtn>
        <QuickBtn $w={12} $off><Caret /></QuickBtn>
        <QuickBtn $w={24}><CustomizeIcon /></QuickBtn>
      </Quick>
      <DocTitle>SWK595.SUM.xlsx - Excel (Product Activation Failed)</DocTitle>
      <WinControls>
        <WinBtn><RibbonDisplay /></WinBtn>
        <WinBtn><Minus size={14} color="#fff" strokeWidth={1} /></WinBtn>
        <WinBtn><Restore /></WinBtn>
        <WinBtn><X size={16} color="#fff" strokeWidth={1} /></WinBtn>
      </WinControls>
    </TitleBar>

    <TabRow>
      <RibbonTab $w={58}>File</RibbonTab>
      <RibbonTab $w={51} $ml={4}>Home</RibbonTab>
      <RibbonTab $w={50}>Insert</RibbonTab>
      <RibbonTab $w={82}>Page Layout</RibbonTab>
      <RibbonTab $w={69}>Formulas</RibbonTab>
      <RibbonTab $w={44} $active>Data</RibbonTab>
      <RibbonTab $w={54}>Review</RibbonTab>
      <RibbonTab $w={45}>View</RibbonTab>
      <TellMe>
        <Lightbulb size={14} color="#fff" strokeWidth={1.2} />
        <span>Tell me what you want to do...</span>
      </TellMe>
      <SignIn>Sign in</SignIn>
      <ShareBtn><ShareUser />Share</ShareBtn>
    </TabRow>

    <Ribbon>
      <Group $w={66}>
        <GroupBody>
          <BigBtn $w={65}>
            <BigIcon $framed><GetDataIcon /></BigIcon>
            <span>Get External</span>
            <span>Data <Caret $c="#666" /></span>
          </BigBtn>
        </GroupBody>
        <GroupLabel />
      </Group>

      <Group $w={153}>
        <GroupBody $pl={4}>
          <BigBtn $w={41}>
            <BigIcon><NewQueryIcon /></BigIcon>
            <span>New</span>
            <span>Query <Caret $c="#666" /></span>
          </BigBtn>
          <SmallCol $ml={4}>
            <SmallItem icon={<TableTop />} label="Show Queries" />
            <SmallItem icon={<GridTable />} label="From Table" />
            <SmallItem icon={<RecentIcon />} label="Recent Sources" />
          </SmallCol>
        </GroupBody>
        <GroupLabel>Get &amp; Transform</GroupLabel>
      </Group>

      <Group $w={139}>
        <GroupBody $pl={4}>
          <BigBtn $w={40}>
            <BigIcon><RefreshIcon /></BigIcon>
            <span>Refresh</span>
            <span>All <Caret $c="#666" /></span>
          </BigBtn>
          <SmallCol $ml={4}>
            <SmallItem icon={<ConnIcon />} label="Connections" />
            <SmallItem icon={<PropsIcon />} label="Properties" off />
            <SmallItem icon={<LinksIcon />} label="Edit Links" off />
          </SmallCol>
        </GroupBody>
        <GroupLabel>Connections</GroupLabel>
      </Group>

      <Group $w={187}>
        <GroupBody $pl={6}>
          <SmallCol $row={30} $top={3}>
            <div><AzIcon up /></div>
            <div><AzIcon /></div>
          </SmallCol>
          <BigBtn $w={36} $ml={3}>
            <BigIcon><SortIcon /></BigIcon>
            <span>Sort</span>
          </BigBtn>
          <VLine $ml={3} $mr={7} />
          <BigBtn $w={32}>
            <BigIcon><FunnelBig /></BigIcon>
            <span>Filter</span>
          </BigBtn>
          <SmallCol $ml={6}>
            <SmallItem icon={<Funnel off mark="x" />} label="Clear" off />
            <SmallItem icon={<Funnel off mark="r" />} label="Reapply" off />
            <SmallItem icon={<Funnel mark="p" />} label="Advanced" />
          </SmallCol>
        </GroupBody>
        <GroupLabel>Sort &amp; Filter</GroupLabel>
      </Group>

      <Group $w={314}>
        <GroupBody $pl={3}>
          <BigBtn $w={48}>
            <BigIcon><TextColsIcon /></BigIcon>
            <span>Text to</span>
            <span>Columns</span>
          </BigBtn>
          <SmallCol $ml={3} $row={21}>
            <SmallItem icon={<FlashIcon />} label="Flash Fill" off />
            <SmallItem icon={<DupIcon />} label="Remove Duplicates" />
            <SmallItem icon={<ValidIcon />} label={<>Data Validation <Caret $c="#666" $ml={3} /></>} />
          </SmallCol>
          <SmallCol $ml={6} $row={21}>
            <SmallItem icon={<ConsolIcon />} label="Consolidate" />
            <SmallItem icon={<RelIcon />} label="Relationships" off />
            <SmallItem icon={<ModelIcon />} label="Manage Data Model" />
          </SmallCol>
        </GroupBody>
        <GroupLabel>Data Tools</GroupLabel>
      </Group>

      <Group $w={107}>
        <GroupBody $pl={3}>
          <BigBtn $w={50}>
            <BigIcon><WhatIfIcon /></BigIcon>
            <span>What-If</span>
            <span>Analysis <Caret $c="#666" /></span>
          </BigBtn>
          <BigBtn $w={50} $ml={2}>
            <BigIcon><ForecastIcon /></BigIcon>
            <span>Forecast</span>
            <span>Sheet</span>
          </BigBtn>
        </GroupBody>
        <GroupLabel>Forecast</GroupLabel>
      </Group>

      <Group $w={109}>
        <GroupBody $pl={4}>
          <SmallCol $row={21}>
            <SmallItem icon={<OutlineIcon v="g" />} label={<>Group <Caret $c="#666" $ml={4} /></>} />
            <SmallItem icon={<OutlineIcon v="u" />} label={<>Ungroup <Caret $c="#666" $ml={3} /></>} />
            <SmallItem icon={<OutlineIcon v="s" />} label="Subtotal" />
          </SmallCol>
          <SmallCol $row={21} $ml={4}>
            <div><OutlineSide plus /></div>
            <div><OutlineSide /></div>
          </SmallCol>
        </GroupBody>
        <GroupLabel>Outline<Launcher><LauncherIcon /></Launcher></GroupLabel>
      </Group>

      <Group $w={100}>
        <GroupBody $pl={5}>
          <SmallCol $row={21}>
            <SmallItem icon={<AnalysisIcon />} label="Data Analysis" />
          </SmallCol>
        </GroupBody>
        <GroupLabel>Analysis</GroupLabel>
      </Group>
      <Collapse><ChevronUp size={14} strokeWidth={2} /></Collapse>
    </Ribbon>

    <FormulaRow>
      <NameBox>AB1<Caret $c="#777" /></NameBox>
      <Grip><i /><i /><i /></Grip>
      <FxBox>
        <X size={15} strokeWidth={1.6} />
        <Check size={15} strokeWidth={1.8} />
        <FxMark>fx</FxMark>
      </FxBox>
      <FormulaInput>
        t-Test: Paired Two Sample for Means
        <ChevronDown size={14} color="#666" strokeWidth={2.4} />
      </FormulaInput>
    </FormulaRow>

    <SheetArea>
      <GridPane>
        <SheetGrid>
          <Corner><CornerMark /></Corner>
          {Letters.map((l, i) => <ColHead key={i} $sel={i >= 14 && i <= 16}>{l}</ColHead>)}
          {Data.map((row, r) => (
            <React.Fragment key={r}>
              <RowHead>{r + 1}</RowHead>
              {row.map((text, c) => (
                <Cell key={c} {...cellProps(r, c)}>
                  <CellText>{text}</CellText>
                </Cell>
              ))}
            </React.Fragment>
          ))}
        </SheetGrid>
        <Selection />
        <CellCursor><CursorCross /></CellCursor>
      </GridPane>
      <VScroll>
        <ScrollBtn><Arrow $d="up" /></ScrollBtn>
        <ScrollThumb />
        <ScrollBtn $end><Arrow $d="down" /></ScrollBtn>
      </VScroll>
    </SheetArea>

    <TabsBar>
      <NavBtn $w={22} $ml={11}><Arrow $d="left" $c={GREEN} /></NavBtn>
      <NavBtn $w={22}><Arrow $d="right" $c="#c5c5c5" /></NavBtn>
      <NavBtn $w={24} $bold>...</NavBtn>
      <SheetTab $w={158}>Base Client Caseload 2</SheetTab>
      <SheetTab $w={86}>Practice #3</SheetTab>
      <SheetTab $w={87}>Practice #4</SheetTab>
      <SheetTab $w={87}>Practice #5</SheetTab>
      <SheetTab $w={60} $active>Sheet2</SheetTab>
      <AddSheet><CirclePlus size={14} strokeWidth={1.2} /></AddSheet>
      <Splitter><i /><i /><i /></Splitter>
      <HScroll>
        <HBtn $white><Arrow $d="left" /></HBtn>
        <HTrack><HThumb /></HTrack>
        <HBtn><Arrow $d="right" /></HBtn>
      </HScroll>
    </TabsBar>

    <StatusBar>
      <Ready>Ready</Ready>
      <Stat $w={109}>Average: 6.60876576</Stat>
      <Stat $w={56}>Count: 28</Stat>
      <Stat $w={103}>Sum: 92.52272064</Stat>
      <ViewBtn $w={27} $on><NormalView /></ViewBtn>
      <ViewBtn $w={30}><PageView /></ViewBtn>
      <ViewBtn $w={28}><BreakView /></ViewBtn>
      <Zoomer>
        <Minus size={11} strokeWidth={2} />
        <ZoomTrack><ZoomThumb /></ZoomTrack>
        <Plus size={12} strokeWidth={2} />
        <ZoomPct>100%</ZoomPct>
      </Zoomer>
    </StatusBar>

    <Taskbar>
      <TaskSlot $w={48}><WinLogo /></TaskSlot>
      <TaskSlot $w={48}><MirroredSearch size={18} color="#ddd" strokeWidth={1.2} /></TaskSlot>
      <TaskSlot $w={48}><CortanaRing /></TaskSlot>
      <TaskSlot $w={48}><TaskViewIcon /></TaskSlot>
      <TaskSlot $ml={3}><FaEdgeLegacy size={24} color="#0f78d4" /></TaskSlot>
      <TaskSlot><StoreIcon /></TaskSlot>
      <TaskSlot><MediaIcon /></TaskSlot>
      <TaskSlot $open><FolderIcon /></TaskSlot>
      <TaskSlot $open><ChromeIcon /></TaskSlot>
      <TaskSlot><FaInternetExplorer size={25} color="#3aa6e8" /></TaskSlot>
      <TaskSlot $open><OfficeTile bg="#c8422a" letter="P" lines="#f1d5cc" /></TaskSlot>
      <TaskSlot $open><OfficeTile bg="#2b579a" letter="W" lines="#cfd9ea" /></TaskSlot>
      <TaskSlot $open $bg="#3a3a3a"><OfficeTile bg="#1e7145" letter="X" lines="#cfe3d6" /></TaskSlot>
      <TaskSlot $open><CamtasiaTile c="#4ea60f" /></TaskSlot>
      <TaskSlot $open $bg="#2a2a2a"><CamtasiaTile c="#ef5548" /></TaskSlot>
      <Tray>
        <Links>Links</Links>
        <Chevrons>»</Chevrons>
        <TrayIcon $ml={10}><ChevronUp size={16} strokeWidth={1.2} /></TrayIcon>
        <TrayIcon $ml={8}><BatteryIcon /></TrayIcon>
        <TrayIcon $ml={6}><Volume1 size={16} strokeWidth={1.1} /></TrayIcon>
        <TrayIcon $ml={11}><WifiIcon /></TrayIcon>
        <Clock>4:54 PM<br />7/2/2020</Clock>
        <Notify><NotifyIcon /></Notify>
      </Tray>
    </Taskbar>
  </Window>
);

export default App;
